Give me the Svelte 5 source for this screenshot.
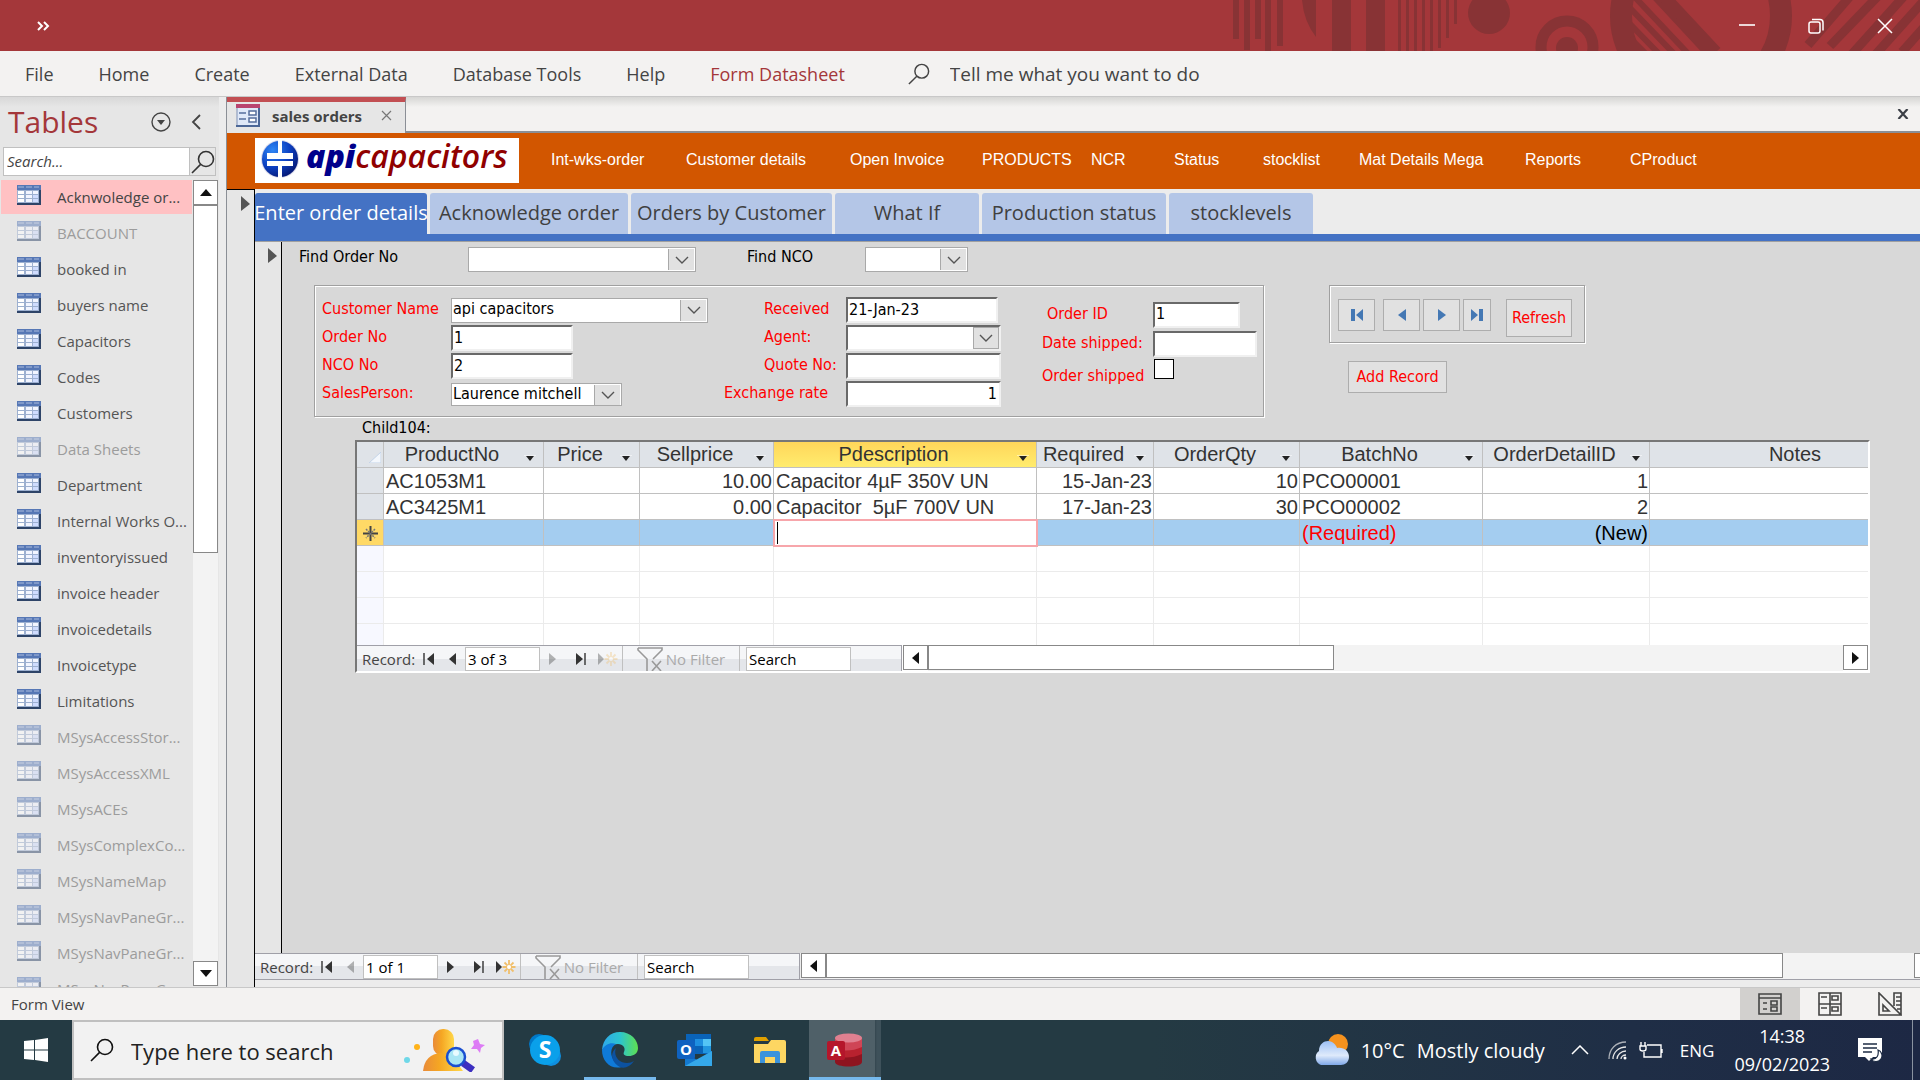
<script lang="ts">
    interface TableItem {
        name: string;
        hidden?: boolean;
    }

    interface Column {
        name: string;
        width: number;
        align: string;
    }

    const menu = ['File', 'Home', 'Create', 'External Data', 'Database Tools', 'Help'];

    const tables: TableItem[] = [
        { name: 'Acknwoledge or...' },
        { name: 'BACCOUNT', hidden: true },
        { name: 'booked in' },
        { name: 'buyers name' },
        { name: 'Capacitors' },
        { name: 'Codes' },
        { name: 'Customers' },
        { name: 'Data Sheets', hidden: true },
        { name: 'Department' },
        { name: 'Internal Works O...' },
        { name: 'inventoryissued' },
        { name: 'invoice header' },
        { name: 'invoicedetails' },
        { name: 'Invoicetype' },
        { name: 'Limitations' },
        { name: 'MSysAccessStor...', hidden: true },
        { name: 'MSysAccessXML', hidden: true },
        { name: 'MSysACEs', hidden: true },
        { name: 'MSysComplexCo...', hidden: true },
        { name: 'MSysNameMap', hidden: true },
        { name: 'MSysNavPaneGr...', hidden: true },
        { name: 'MSysNavPaneGr...', hidden: true },
        { name: 'MSysNavPaneGr...', hidden: true }
    ];

    const links = [
        'Int-wks-order', 'Customer details', 'Open Invoice', 'PRODUCTS', 'NCR',
        'Status', 'stocklist', 'Mat Details Mega', 'Reports', 'CProduct'
    ];

    const tabs = [
        { name: 'Enter order details', width: 172 },
        { name: 'Acknowledge order', width: 198 },
        { name: 'Orders by Customer', width: 201 },
        { name: 'What If', width: 144 },
        { name: 'Production status', width: 184 },
        { name: 'stocklevels', width: 144 }
    ];

    const columns: Column[] = [
        { name: 'ProductNo', width: 160, align: 'left' },
        { name: 'Price', width: 96, align: 'right' },
        { name: 'Sellprice', width: 134, align: 'right' },
        { name: 'Pdescription', width: 263, align: 'left' },
        { name: 'Required', width: 117, align: 'right' },
        { name: 'OrderQty', width: 146, align: 'right' },
        { name: 'BatchNo', width: 183, align: 'left' },
        { name: 'OrderDetailID', width: 167, align: 'right' },
        { name: 'Notes', width: 314, align: 'left' }
    ];

    const rows = [
        ['AC1053M1', '', '10.00', 'Capacitor 4µF 350V UN', '15-Jan-23', '10', 'PCO00001', '1', ''],
        ['AC3425M1', '', '0.00', 'Capacitor  5µF 700V UN', '17-Jan-23', '30', 'PCO00002', '2', '']
    ];

    let selectedTable = $state(0);
    let activeTab = $state(0);
    let shipped = $state(false);
</script>

{#snippet chevron()}
    <svg class="chevron" width="14" height="8" viewBox="0 0 14 8"><path d="M1 1l6 6 6-6" fill="none" stroke="#555" stroke-width="1.4" /></svg>
{/snippet}

{#snippet combo(id, value, width, small)}
    <div class="combo" class:small style:width="{width}px">
        <select {id}><option>{value}</option></select>
        <span class="drop">{@render chevron()}</span>
    </div>
{/snippet}

{#snippet lens(size, color)}
    <svg width={size} height={size} viewBox="0 0 24 24" fill="none" stroke={color} stroke-width="1.6">
        <circle cx="15" cy="9" r="7.5" /><path d="M9.6 14.4L1 23" />
    </svg>
{/snippet}

{#snippet sheetIcon()}
    <svg width="24" height="20" viewBox="0 0 24 20">
        <path d="M0 0h24v20H0z" fill="#9db0d0" />
        <path d="M0 0h24v5H0z" fill="#5677b5" />
        <path d="M22 5h2v15H0v-2h22z" fill="#2e4468" />
        <path d="M1 2h6M9 2h6M17 2h5" stroke="#a9bbdd" />
        <path d="M1 6h6v3H1zM1 10h6v3H1zM1 14h6v3H1z" fill="#fff" />
        <path d="M9 6h6v3H9zM9 10h6v3H9zM9 14h6v3H9zM16 6h5v3h-5z" fill="#f2f5ff" />
        <path d="M16 10h5v3h-5zM16 14h5v3h-5z" fill="#cfdcff" />
    </svg>
{/snippet}

{#snippet recordBar(id, position, first, next, thumb)}
    <div class="record-bar">
        <div class="record-nav">
            <label class="record-label" for="{id}-pos">Record:</label>
            <button aria-label="First record"><svg width="12" height="12" viewBox="0 0 12 12"><path d="M1 0v12" stroke="#333" stroke-width="1.4" /><path d="M11 0v12L4 6z" fill="#333" /></svg></button>
            <button aria-label="Previous record" disabled={!first}><svg width="8" height="12" viewBox="0 0 8 12"><path d="M7 0v12L0 6z" fill="#333" /></svg></button>
            <input class="position" id="{id}-pos" value={position} />
            <button aria-label="Next record" disabled={!next}><svg width="8" height="12" viewBox="0 0 8 12"><path d="M1 0v12l7-6z" fill="#333" /></svg></button>
            <button class="last" aria-label="Last record"><svg width="12" height="12" viewBox="0 0 12 12"><path d="M1 0v12l7-6z" fill="#333" /><path d="M10 0v12" stroke="#333" stroke-width="1.4" /></svg></button>
            <button class="new" aria-label="New record" disabled={!next}>
                <svg width="21" height="14" viewBox="0 0 21 14"><path d="M1 1v12l6-6z" fill="#333" /><path d="M14 0v14M7.5 7h13M9.5 2.5l9 9M18.5 2.5l-9 9" stroke="#f0bf6c" stroke-width="1.8" /><circle cx="14" cy="7" r="2" fill="#fff" /></svg>
            </button>
            <button class="filter">
                <svg width="26" height="25" viewBox="0 0 26 25" fill="none" stroke="#999" stroke-width="1.6"><path d="M1 2h24v2l-9 9M1 2v2l9 9v12" /><path d="M15 15l9 10M24 15l-9 10" /></svg>
                No Filter
            </button>
            <input class="record-search" aria-label="Search records" value="Search" />
        </div>
        <div class="h-scroll">
            <button class="scroll-button" aria-label="Scroll left"><svg width="7" height="12" viewBox="0 0 7 12"><path d="M7 0v12L0 6z" fill="#111" /></svg></button>
            <div class="h-track"><div class="h-thumb" style:width="{thumb}%"></div></div>
            <button class="scroll-button" aria-label="Scroll right"><svg width="7" height="12" viewBox="0 0 7 12"><path d="M0 0v12l7-6z" fill="#111" /></svg></button>
        </div>
    </div>
{/snippet}

<div class="window">
    <header class="title-bar">
        <button class="more" aria-label="Quick access">
            <svg width="14" height="10" viewBox="0 0 14 10" fill="none" stroke="#fff" stroke-width="2"><path d="M2 1l4 4-4 4M8 1l4 4-4 4" /></svg>
        </button>
        <div class="title-right">
            <svg class="pattern" width="690" height="51" viewBox="0 0 690 51" fill="#883335">
                <path d="M3 0h6v39H3zM14 0h6v50h-6zM25 0h6v39h-6zM35 0h6v51h-6zM47 0h6v46h-6z" />
                <path d="M72 0q2 22 14 37V0zM102 0h19v51h-19zM136 0h19v51h-19z" />
                <path d="M168 0h3v51h-3zM176 0h3v51h-3zM184 0h3v51h-3zM192 0h3v51h-3zM200 0h3v51h-3zM208 0h3v48h-3zM216 0h3v38h-3zM224 0h3v24h-3z" />
                <circle cx="259" cy="13" r="21" />
                <circle cx="337" cy="47" r="26" fill="none" stroke="#883335" stroke-width="11" />
                <circle cx="337" cy="48" r="11" />
                <circle cx="471" cy="16" r="80" fill="none" stroke="#883335" stroke-width="22" />
                <path d="M418 -10l65 70M400 -8l66 70M400 8l50 52M400 24l34 35M400 38l20 20" fill="none" stroke="#883335" stroke-width="6" />
                <path d="M428 -10l58 62" fill="none" stroke="#883335" stroke-width="12" />
                <path d="M622 -6l-44 51M650 -6l-50 52M676 -6l-54 60M700 -6l-54 60M720 -2l-48 54" fill="none" stroke="#883335" stroke-width="9" />
            </svg>
            <div class="window-buttons">
                <button aria-label="Minimize"><svg width="16" height="16" viewBox="0 0 16 16"><path d="M0 7h16" stroke="#fff" stroke-width="1.6" /></svg></button>
                <button aria-label="Restore"><svg width="16" height="16" viewBox="0 0 16 16" fill="none" stroke="#fff" stroke-width="1.5"><rect x="1" y="4" width="11" height="11" rx="2" /><path d="M4 1.5h8q3 0 3 3v8" /></svg></button>
                <button aria-label="Close"><svg width="16" height="16" viewBox="0 0 16 16"><path d="M1 1l14 14M15 1L1 15" stroke="#fff" stroke-width="1.5" /></svg></button>
            </div>
        </div>
    </header>

    <nav class="ribbon">
        {#each menu as name}
            <button>{name}</button>
        {/each}
        <button class="context">Form Datasheet</button>
        <label class="tell-me">
            {@render lens(22, '#444')}
            <input placeholder="Tell me what you want to do" />
        </label>
    </nav>

    <div class="workspace">
        <aside class="sidebar">
            <div class="sidebar-head">
                <h2>Tables</h2>
                <button aria-label="Choose category"><svg width="20" height="20" viewBox="0 0 20 20"><circle cx="10" cy="10" r="9" fill="none" stroke="#444" stroke-width="1.4" /><path d="M6 8h8l-4 5z" fill="#444" /></svg></button>
                <button aria-label="Collapse pane"><svg width="10" height="16" viewBox="0 0 10 16"><path d="M9 1L2 8l7 7" fill="none" stroke="#444" stroke-width="1.8" /></svg></button>
            </div>
            <div class="sidebar-search">
                <input aria-label="Search tables" placeholder="Search..." />
                <button aria-label="Search">{@render lens(24, '#333')}</button>
            </div>
            <div class="sidebar-body">
                <ul>
                    {#each tables as table, i}
                        <li>
                            <button class:selected={i === selectedTable} class:dim={table.hidden} onclick={() => (selectedTable = i)}>
                                {@render sheetIcon()}
                                <span>{table.name}</span>
                            </button>
                        </li>
                    {/each}
                </ul>
                <div class="v-scroll">
                    <button class="scroll-button" aria-label="Scroll up"><svg width="12" height="7" viewBox="0 0 12 7"><path d="M0 7h12L6 0z" fill="#111" /></svg></button>
                    <div class="v-track"><div class="v-thumb"></div></div>
                    <button class="scroll-button" aria-label="Scroll down"><svg width="12" height="7" viewBox="0 0 12 7"><path d="M0 0h12L6 7z" fill="#111" /></svg></button>
                </div>
            </div>
        </aside>

        <main>
            <div class="doc-tabs">
                <div class="doc-tab">
                    <svg width="24" height="23" viewBox="0 0 24 23">
                        <path d="M1 1h22v21H1z" fill="#dfe8f8" stroke="#7e90b4" />
                        <path d="M0 0h24v4H0z" fill="#b9446f" />
                        <path d="M24 4v19H0v-2h22V4z" fill="#4c6797" />
                        <path d="M3 9h7M3 15h7" stroke="#566d9c" stroke-width="1.5" />
                        <path d="M13 7h7v4h-7zM13 14h7v4h-7z" fill="#fff" stroke="#566d9c" stroke-width="1.5" />
                    </svg>
                    <span>sales orders</span>
                    <button aria-label="Close tab"><svg width="11" height="11" viewBox="0 0 11 11"><path d="M1 1l9 9M10 1l-9 9" stroke="#777" stroke-width="1.2" /></svg></button>
                </div>
                <button class="close-doc" aria-label="Close document"><svg width="12" height="10" viewBox="0 0 12 10"><path d="M1.5 0l9 10M10.5 0l-9 10" stroke="#3b3f46" stroke-width="2.2" /></svg></button>
            </div>

            <div class="banner">
                <div class="logo">
                    <svg width="40" height="40" viewBox="0 0 40 40">
                        <defs>
                            <radialGradient id="ball" cx="30%" cy="25%" r="80%">
                                <stop offset="0" stop-color="#2f86f5" /><stop offset="0.6" stop-color="#0c3fc0" /><stop offset="1" stop-color="#061a78" />
                            </radialGradient>
                        </defs>
                        <circle cx="20" cy="20" r="19" fill="#d9d9ea" />
                        <circle cx="20" cy="20" r="18" fill="url(#ball)" />
                        <path d="M18 1h4v13h11v6H7v-6h11zM7 22h26v5H22v12h-4V27H7z" fill="#fff" />
                        <path d="M7 16h26v2H7z" fill="#fff" />
                    </svg>
                    <span><b>api</b>capacitors</span>
                </div>
                <nav>
                    {#each links as link}
                        <a href="#{link}">{link}</a>
                    {/each}
                </nav>
            </div>

            <div class="form-area">
                <div class="selector">
                    <svg width="9" height="15" viewBox="0 0 9 15"><path d="M0 0v15l9-7z" fill="#555" /></svg>
                </div>
                <div class="form-main">
                    <div class="tab-strip" role="tablist">
                        {#each tabs as tab, i}
                            <button role="tab" aria-selected={i === activeTab} class:active={i === activeTab} style:width="{tab.width}px" onclick={() => (activeTab = i)}>{tab.name}</button>
                        {/each}
                    </div>

                    <div class="sub-area">
                        <div class="selector sub">
                            <svg width="9" height="15" viewBox="0 0 9 15"><path d="M0 0v15l9-7z" fill="#555" /></svg>
                        </div>
                        <div class="form">
                            <div class="find-row">
                                <label class="find-order" for="find-order">Find Order No</label>
                                {@render combo('find-order', '', 228, false)}
                                <label class="find-nco" for="find-nco">Find NCO</label>
                                {@render combo('find-nco', '', 103, false)}
                            </div>

                            <div class="details-row">
                                <div class="group details">
                                    <div class="fields first">
                                        <label for="customer">Customer Name</label>
                                        {@render combo('customer', 'api capacitors', 257, false)}
                                        <label for="order-no">Order No</label>
                                        <input id="order-no" class="sunken w-122" value="1" />
                                        <label for="nco-no">NCO No</label>
                                        <input id="nco-no" class="sunken w-122" value="2" />
                                        <label for="sales">SalesPerson:</label>
                                        {@render combo('sales', 'Laurence mitchell', 171, true)}
                                    </div>
                                    <div class="fields second">
                                        <label class="indent" for="received">Received</label>
                                        <input id="received" class="sunken w-152" value="21-Jan-23" />
                                        <label class="indent" for="agent">Agent:</label>
                                        <div class="combo inset">
                                            <select id="agent"><option></option></select>
                                            <span class="drop">{@render chevron()}</span>
                                        </div>
                                        <label class="indent" for="quote">Quote No:</label>
                                        <input id="quote" class="sunken w-155" />
                                        <label for="rate">Exchange rate</label>
                                        <input id="rate" class="sunken w-155 number" value="1" />
                                    </div>
                                    <div class="fields third">
                                        <label class="order-id" for="order-id">Order ID</label>
                                        <input id="order-id" class="sunken w-87" value="1" />
                                        <label for="date-shipped">Date shipped:</label>
                                        <input id="date-shipped" class="sunken w-104" />
                                        <label class="low" for="shipped">Order shipped</label>
                                        <input id="shipped" type="checkbox" bind:checked={shipped} />
                                    </div>
                                </div>

                                <div class="actions">
                                    <div class="group nav-group">
                                        <button class="nav-button spaced" aria-label="First"><svg width="12" height="12" viewBox="0 0 12 12" fill="#4478b4"><path d="M0 0h4v12H0zM12 0v12L5 6z" /></svg></button>
                                        <button class="nav-button" aria-label="Previous"><svg width="8" height="12" viewBox="0 0 8 12" fill="#4478b4"><path d="M8 0v12L0 6z" /></svg></button>
                                        <button class="nav-button" aria-label="Next"><svg width="8" height="12" viewBox="0 0 8 12" fill="#4478b4"><path d="M0 0v12l8-6z" /></svg></button>
                                        <button class="nav-button narrow" aria-label="Last"><svg width="12" height="12" viewBox="0 0 12 12" fill="#4478b4"><path d="M0 0v12l7-6zM8 0h4v12H8z" /></svg></button>
                                        <button class="text-button refresh">Refresh</button>
                                    </div>
                                    <button class="text-button add">Add Record</button>
                                </div>
                            </div>

                            <p class="child-label" id="child-label">Child104:</p>

                            <div class="subform">
                                <div class="sheet">
                                    <table aria-labelledby="child-label">
                                        <colgroup>
                                            <col class="col-selector" />
                                            {#each columns as column}
                                                <col style:width="{column.width}px" />
                                            {/each}
                                        </colgroup>
                                        <thead>
                                            <tr>
                                                <th class="corner" aria-label="Select all"><svg width="12" height="11" viewBox="0 0 12 11"><path d="M12 0v11H0z" fill="#f3f7fc" stroke="#c3d3e8" /></svg></th>
                                                {#each columns as column}
                                                    <th class:current={column.name === 'Pdescription'}>
                                                        <div>
                                                            <span>{column.name}</span>
                                                            <svg width="12" height="6" viewBox="0 0 12 6"><path d="M0 0h12" stroke="#fff" /><path d="M2 1h8L6 6z" fill="#222" /></svg>
                                                        </div>
                                                    </th>
                                                {/each}
                                            </tr>
                                        </thead>
                                        <tbody>
                                            {#each rows as row}
                                                <tr>
                                                    <th scope="row" aria-label="Record"></th>
                                                    {#each row as cell, i}
                                                        <td class={columns[i].align}>{cell}</td>
                                                    {/each}
                                                </tr>
                                            {/each}
                                            <tr class="new-row">
                                                <th scope="row" aria-label="New record"><svg width="15" height="15" viewBox="0 0 15 15"><path d="M7.5 0v15M0 7.5h15" stroke="#444" stroke-width="2" /><path d="M3 3l9 9M12 3l-9 9" stroke="#777" stroke-width="1.5" stroke-dasharray="2 1" /></svg></th>
                                                <td></td>
                                                <td></td>
                                                <td></td>
                                                <td class="editing"><div><span class="caret"></span><input aria-label="Pdescription" /></div></td>
                                                <td></td>
                                                <td></td>
                                                <td class="left required">(Required)</td>
                                                <td class="right">(New)</td>
                                                <td></td>
                                            </tr>
                                            {#each [1, 2, 3, 4] as _}
                                                <tr class="blank">
                                                    <th scope="row" aria-label="Empty"></th>
                                                    {#each columns as _column}
                                                        <td></td>
                                                    {/each}
                                                </tr>
                                            {/each}
                                        </tbody>
                                    </table>
                                </div>
                                {@render recordBar('sub', '3 of 3', true, false, 44.4)}
                            </div>
                        </div>
                    </div>

                    <div class="main-record">
                        {@render recordBar('main', '1 of 1', false, true, 88)}
                    </div>
                </div>
            </div>
        </main>
    </div>

    <footer class="status-bar">
        <span>Form View</span>
        <div class="views">
            <button class="on" aria-label="Form View"><svg width="24" height="24" viewBox="0 0 24 24" fill="none" stroke="#444" stroke-width="1.6"><path d="M1 2h22v20H1zM1 6h22M5 11h4M5 17h4M13 9h6v4h-6zM13 15h6v4h-6z" /></svg></button>
            <button aria-label="Layout View"><svg width="24" height="24" viewBox="0 0 24 24" fill="none" stroke="#444" stroke-width="1.6"><path d="M1 1h22v22H1zM12 1v22M1 12h22M3 5h6M3 16h6M14 4h6v4h-6zM14 15h6v4h-6z" /></svg></button>
            <button aria-label="Design View"><svg width="24" height="24" viewBox="0 0 24 24" fill="none" stroke="#444" stroke-width="1.6"><path d="M1 1v22h22zM5 13v6h6zM16 14V1h7v22M18 5h5M18 9h5M18 13h5M19 17h4" /></svg></button>
        </div>
    </footer>

    <div class="taskbar">
        <button class="start" aria-label="Start"><svg width="24" height="24" viewBox="0 0 24 24" fill="#fff"><path d="M0 3l10-1v9.500H0zM11 2l13-2v11.500H11zM0 12.500h10V22L0 21zM11 12.500h13V24l-13-2z" /></svg></button>
        <label class="task-search">
            {@render lens(24, '#111')}
            <input placeholder="Type here to search" />
            <svg width="82" height="44" viewBox="0 0 82 44">
                <defs>
                    <linearGradient id="gold" x1="0" x2="1"><stop offset="0" stop-color="#e98b3a" /><stop offset="0.4" stop-color="#f5a623" /><stop offset="1" stop-color="#ffd84a" /></linearGradient>
                </defs>
                <circle cx="14" cy="19" r="3" fill="#ffb31a" /><circle cx="4" cy="32" r="3" fill="#6fd8e8" />
                <rect x="30" y="1" width="21" height="27" rx="10" fill="url(#gold)" />
                <path d="M20 43q2-17 18-18 10 1 22 18z" fill="url(#gold)" />
                <path d="M60 35l10 7" stroke="#3c2fc0" stroke-width="7" />
                <circle cx="53" cy="29" r="9" fill="#a9e6f4" stroke="#1a4fd0" stroke-width="2.5" />
                <circle cx="53" cy="25" r="3" fill="#e8fbff" />
                <path d="M75 11l2 5 5 1-4 3-1 5-3-4-6 0 3-4-1-4z" fill="#dd7bf5" />
            </svg>
        </label>
        <div class="apps">
            <button aria-label="Skype">
                <svg width="34" height="34" viewBox="0 0 34 34"><circle cx="11" cy="11" r="10" fill="#0078c8" /><circle cx="23" cy="23" r="10" fill="#0f8fe0" /><circle cx="17" cy="17" r="15" fill="#0aa0ea" /><text x="17" y="25" text-anchor="middle" font-size="23" font-weight="700" fill="#fff">S</text></svg>
            </button>
            <button class="open" aria-label="Edge">
                <svg width="36" height="36" viewBox="0 0 36 36">
                    <defs><linearGradient id="edge" x1="0" x2="1"><stop offset="0" stop-color="#2fa7ea" /><stop offset="0.5" stop-color="#2cc4cf" /><stop offset="1" stop-color="#5fe04f" /></linearGradient></defs>
                    <path d="M0 18C1 7 8 0 18 0c11 0 18 8 18 16 0 6-5 8-9 8-5 0-6-2-5-4 2-4-1-8-6-8C8 12 3 15 0 18z" fill="url(#edge)" />
                    <path d="M0 18c3-6 9-8 14-6-4 2-6 7-4 13 2 5 6 8 10 10C8 38 0 29 0 18z" fill="#0f7ad8" />
                    <path d="M14 16c-3 8 3 15 11 15 3 0 5-1 7-2-4 6-10 8-14 6-8-4-11-13-4-19z" fill="#0c52a0" />
                </svg>
            </button>
            <button aria-label="Outlook">
                <svg width="36" height="34" viewBox="0 0 36 34"><path d="M9 1h25v20H9z" fill="#0a63b8" /><path d="M18 6h8v7h-8z" fill="#1f8fe0" /><path d="M26 6h8v7h-8z" fill="#54c4f5" /><path d="M26 13h8v7h-8z" fill="#2296e0" /><path d="M8 20l14 8 13-10v15H8z" fill="#1479d0" /><path d="M8 33l27-15v15z" fill="#35a8ea" /><rect y="7" width="18" height="19" rx="2" fill="#0f62c0" /><text x="9" y="22" text-anchor="middle" font-size="15" font-weight="700" fill="#fff">O</text></svg>
            </button>
            <button aria-label="File Explorer">
                <svg width="32" height="28" viewBox="0 0 32 28"><path d="M0 3q0-2 2-2h10l3 4H0z" fill="#e0a000" /><path d="M0 8l14 0 3-4h13q2 0 2 2v20q0 1-1 1H1q-1 0-1-1z" fill="#fdd662" /><path d="M6 27V17q0-2 2-2h16q2 0 2 2v10h-5v-6H11v6z" fill="#3b93dc" /></svg>
            </button>
            <button class="open current" aria-label="Access">
                <svg width="36" height="34" viewBox="0 0 36 34"><path d="M8 5v24c0 6 27 6 27 0V5z" fill="#8e1420" /><path d="M8 12h27v9q-13 6-27 2z" fill="#b8222f" /><path d="M8 5h27v9q-13 6-27 2z" fill="#cf4556" /><ellipse cx="21.500" cy="5" rx="13.500" ry="4.500" fill="#e08090" /><rect y="8" width="18" height="19" rx="2" fill="#b5162b" /><text x="9" y="23" text-anchor="middle" font-size="15" font-weight="700" fill="#fff">A</text></svg>
            </button>
        </div>
        <div class="tray">
            <button class="weather">
                <svg width="36" height="32" viewBox="0 0 36 32">
                    <defs><linearGradient id="cloud" x1="0" x2="0" y1="0" y2="1"><stop offset="0" stop-color="#9cc0f5" /><stop offset="0.6" stop-color="#dfeafb" /><stop offset="1" stop-color="#7fa8e8" /></linearGradient></defs>
                    <circle cx="25" cy="10" r="10" fill="#f5921e" />
                    <path d="M8 31a8 8 0 0 1-2-14C6 10 11 7 15 7c5 0 8 4 9 7 7-1 12 3 12 9 0 5-4 8-8 8z" fill="url(#cloud)" />
                </svg>
                <span>10°C</span>
                <span>Mostly cloudy</span>
            </button>
            <button aria-label="Show hidden icons"><svg width="18" height="10" viewBox="0 0 18 10"><path d="M1 9l8-8 8 8" fill="none" stroke="#fff" stroke-width="1.5" /></svg></button>
            <button class="wifi" aria-label="Network">
                <svg width="19" height="19" viewBox="0 0 19 19" fill="none" stroke="#e8e8e8" stroke-width="1.3"><path d="M1 18C1 8 8 1 18 1" opacity="0.7" /><path d="M5 18C5 11 11 6 18 6M9 18c0-4 4-8 9-8M13 18c0-2 2-4 5-4" /><circle cx="17" cy="17" r="1.5" fill="#fff" stroke="none" /></svg>
            </button>
            <button class="battery" aria-label="Battery">
                <svg width="24" height="18" viewBox="0 0 24 18" fill="none" stroke="#fff" stroke-width="1.4"><path d="M8 4h14v12H5v-5M23 8v4M1 5h6v3q0 2-3 2-3 0-3-2zM2 1v4M6 1v4" /></svg>
            </button>
            <button class="lang">ENG</button>
            <button class="clock"><span>14:38</span><span>09/02/2023</span></button>
            <button class="notes" aria-label="Notifications">
                <svg width="24" height="26" viewBox="0 0 24 26"><path d="M0 1h24v19h-9l-4 4-4-4H0z" fill="#fff" /><path d="M5 7h14M5 11h14M5 15h9" stroke="#1e2c44" stroke-width="1.4" /><path d="M20 13a6 6 0 1 1-7 9c6 1 8-4 7-9z" fill="#fff" stroke="#1e2c44" stroke-width="1.2" /></svg>
            </button>
            <span class="peek"></span>
        </div>
    </div>
</div>

<style>
    :global(body) {
        margin: 0;
    }

    .window {
        display: flex;
        flex-direction: column;
        height: 100vh;
        overflow: hidden;
        font-family: "Open Sans", "Noto Sans", sans-serif;
        font-size: 16px;
        color: #444;
    }

    .window * {
        box-sizing: border-box;
    }

    button {
        display: flex;
        align-items: center;
        justify-content: center;
        flex-shrink: 0;
        padding: 0;
        border: 0;
        background: none;
        font: inherit;
        color: inherit;
        white-space: nowrap;
    }

    input,
    select {
        min-width: 0;
        margin: 0;
        border: 0;
        border-radius: 0;
        outline: 0;
        font: inherit;
        color: inherit;
        background: none;
    }

    svg {
        display: block;
        flex-shrink: 0;
    }

    /* Title bar */
    .title-bar {
        display: flex;
        justify-content: space-between;
        flex-shrink: 0;
        height: 51px;
        background: #a4373a;
    }

    .more {
        margin-left: 36px;
    }

    .title-right {
        display: grid;
        justify-items: end;
    }

    .pattern,
    .window-buttons {
        grid-area: 1 / 1;
    }

    .window-buttons {
        display: flex;
        padding-right: 1px;
    }

    .window-buttons button {
        width: 69px;
    }

    /* Ribbon */
    .ribbon {
        display: flex;
        align-items: center;
        flex-shrink: 0;
        gap: 45px;
        height: 46px;
        padding-left: 25px;
        background: #f3f2f1;
        border-bottom: 1px solid #c8c8c8;
        font-size: 18px;
        color: #444;
    }

    .ribbon .context {
        color: #a4373a;
    }

    .tell-me {
        display: flex;
        align-items: center;
        gap: 20px;
        margin-left: 18px;
        font-size: 19px;
    }

    .tell-me input {
        width: 300px;
        padding: 0;
    }

    input::placeholder {
        color: inherit;
        opacity: 1;
    }

    .workspace {
        display: flex;
        flex: 1;
        min-height: 0;
        background: #ececec;
    }

    /* Navigation pane */
    .sidebar {
        display: flex;
        flex-direction: column;
        width: 219px;
        flex-shrink: 0;
        background: linear-gradient(#d8d8d8, #e6e6e6 10px);
    }

    .sidebar-head {
        display: flex;
        align-items: center;
        height: 50px;
        padding: 0 18px 0 8px;
        gap: 20px;
    }

    .sidebar-head h2 {
        flex: 1;
        margin: 0;
        font-size: 30px;
        font-weight: 400;
        line-height: 36px;
        color: #a4373a;
    }

    .sidebar-search {
        display: flex;
        height: 29px;
        margin: 0 3px 4px;
        border: 1px solid #c0c0c0;
        background: #fff;
        font-size: 15px;
        font-style: italic;
    }

    .sidebar-search input {
        flex: 1;
        padding: 0 3px 2px;
    }

    .sidebar-search button {
        width: 26px;
        border-left: 1px solid #c0c0c0;
        background: #e6e6e6;
    }

    .sidebar-body {
        display: flex;
        flex: 1;
        min-height: 0;
    }

    ul {
        flex: 1;
        margin: 0;
        padding: 0 1px;
        list-style: none;
        overflow: hidden;
    }

    li {
        height: 36px;
    }

    li button {
        justify-content: flex-start;
        gap: 16px;
        width: 100%;
        height: 34px;
        padding-left: 16px;
        font-size: 15px;
        color: #555;
    }

    li svg {
        margin-bottom: 4px;
    }

    li button.selected {
        background: #ffc1c3;
        color: #444;
    }

    li button.dim {
        color: #9c9c9c;
    }

    .dim svg {
        opacity: 0.5;
    }

    .v-scroll {
        display: flex;
        flex-direction: column;
        width: 26px;
        padding: 0 1px 1px 0;
    }

    .scroll-button {
        width: 25px;
        height: 25px;
        border: 1px solid #888;
        background: #fff;
    }

    .v-track {
        flex: 1;
        background: #f3f3f3;
    }

    .v-thumb {
        height: 46%;
        border: 1px solid #888;
        background: #fff;
    }

    /* Document area */
    main {
        display: flex;
        flex-direction: column;
        flex: 1;
        min-width: 0;
        margin-left: 7px;
        border-left: 1px solid #8b8f96;
    }

    .doc-tabs {
        display: flex;
        justify-content: space-between;
        flex-shrink: 0;
        height: 36px;
        background: linear-gradient(#d6d6d4, #f3f2f1 10px);
        border-bottom: 2px solid #8b8f96;
    }

    .doc-tab {
        display: flex;
        align-items: center;
        width: 179px;
        height: 36px;
        padding: 0 13px 4px 9px;
        border-top: 5px solid #c24f53;
        border-right: 1px solid #8b8f96;
        background: #e6e6e6;
        font-size: 15px;
        font-weight: 700;
    }

    .doc-tab span {
        flex: 1;
        margin-left: 12px;
    }

    .close-doc {
        margin-right: 11px;
    }

    .banner {
        display: flex;
        align-items: center;
        flex-shrink: 0;
        height: 56px;
        padding-left: 28px;
        background: #d25600;
    }

    .logo {
        display: flex;
        align-items: center;
        gap: 6px;
        width: 264px;
        height: 45px;
        margin-bottom: 2px;
        padding: 0 0 2px 5px;
        flex-shrink: 0;
        background: #fff;
        color: #900000;
        font-size: 32px;
        font-style: italic;
        font-weight: 600;
        line-height: 38px;
    }

    .logo span {
        margin-bottom: 6px;
    }

    .logo b {
        color: #00008b;
        font-weight: 800;
    }

    .banner nav {
        display: grid;
        grid-template-columns: 135px 164px 132px 109px 83px 89px 96px 166px 105px auto;
        margin: 0 0 2px 32px;
        font-family: "Liberation Sans", Arial, sans-serif;
        font-size: 16px;
        line-height: 20px;
    }

    .banner a {
        color: #fff;
        text-decoration: none;
        white-space: nowrap;
    }

    .form-area {
        display: flex;
        flex: 1;
        min-height: 0;
    }

    .selector {
        width: 28px;
        flex-shrink: 0;
        padding: 6px 0 0 14px;
        border-right: 1px solid #000;
        border-top: 1px solid #000;
        background: #e6e6e6;
    }

    .selector.sub {
        width: 27px;
        border-top: 0;
        padding-left: 13px;
    }

    .form-main {
        display: flex;
        flex-direction: column;
        flex: 1;
        min-width: 0;
    }

    .tab-strip {
        display: flex;
        gap: 3px;
        flex-shrink: 0;
        padding-top: 4px;
        border-bottom: 7px solid #4472c4;
        background: #ececec;
        font-size: 20px;
    }

    .tab-strip button {
        height: 41px;
        padding-bottom: 2px;
        border-radius: 3px 3px 0 0;
        background: #b4c6e7;
        color: #404040;
    }

    .tab-strip button.active {
        background: #4472c4;
        color: #fff;
    }

    .sub-area {
        display: flex;
        flex: 1;
        min-height: 0;
        border-top: 1px solid #a0a0a0;
    }

    .form {
        flex: 1;
        min-width: 0;
        overflow: hidden;
        background: #d8d8d8;
        color: #000;
        font-family: "DejaVu Sans Condensed", "Noto Sans", sans-serif;
        font-size: 16px;
        line-height: 20px;
    }

    .find-row {
        display: flex;
        padding: 5px 0 0 17px;
    }

    .find-order {
        width: 169px;
    }

    .find-nco {
        width: 118px;
        margin-left: 51px;
    }

    .combo {
        display: grid;
        grid-template-columns: 1fr 28px;
        height: 25px;
        border: 1px solid #a9a9a9;
        background: #fff;
        color: #000;
    }

    .combo.small {
        height: 23px;
    }

    .combo select {
        grid-area: 1 / 1 / 2 / 3;
        height: 100%;
        padding: 0 0 2px 1px;
        appearance: none;
    }

    .drop {
        grid-area: 1 / 2;
        display: flex;
        align-items: center;
        justify-content: center;
        margin: 1px;
        border-left: 1px solid #a9a9a9;
        background: #e1e1e1;
        pointer-events: none;
    }

    .group {
        border: 1px solid #a0a0a0;
        box-shadow: inset 1px 1px #fff, 1px 1px #fff;
    }

    .details-row {
        display: flex;
        gap: 65px;
        margin-top: 13px;
        padding-left: 32px;
    }

    .details {
        display: flex;
        width: 950px;
        height: 132px;
        padding: 10px 0 0 7px;
    }

    .fields {
        display: grid;
        grid-auto-rows: 28px;
        align-content: start;
        align-items: center;
        color: #ff0000;
    }

    .fields label {
        padding-bottom: 2px;
        white-space: nowrap;
    }

    .first {
        grid-template-columns: 129px auto;
        justify-items: start;
    }

    .second {
        grid-template-columns: 122px 155px;
        margin-left: 16px;
    }

    .third {
        grid-template-columns: 111px auto;
        grid-auto-rows: 29px;
        margin-left: 41px;
        padding-top: 4px;
    }

    .indent {
        padding-left: 40px;
    }

    .order-id {
        padding-left: 5px;
    }

    .fields .low {
        padding: 6px 0 0;
    }

    .sunken {
        height: 26px;
        padding: 0 2px 2px 1px;
        border: 2px solid;
        border-color: #696969 #f0f0f0 #f0f0f0 #696969;
        background: #fff;
        color: #000;
    }

    .w-122 {
        width: 122px;
    }

    .w-152 {
        width: 152px;
    }

    .w-155 {
        width: 155px;
    }

    .w-87 {
        width: 87px;
    }

    .w-104 {
        width: 104px;
    }

    .number {
        text-align: right;
    }

    .combo.inset {
        grid-template-columns: 1fr 26px;
        height: 26px;
        border: 2px solid;
        border-color: #696969 #f0f0f0 #f0f0f0 #696969;
    }

    .inset .drop {
        margin: 0;
        border: 1px solid #a9a9a9;
    }

    input[type="checkbox"] {
        appearance: none;
        width: 20px;
        height: 20px;
        margin: 0 0 8px 1px;
        border: 1px solid #000;
        background: #fff;
    }

    .nav-group {
        display: flex;
        align-items: flex-start;
        width: 256px;
        height: 58px;
        padding: 13px 0 0 8px;
        gap: 3px;
    }

    .nav-button,
    .text-button {
        height: 32px;
        border: 1px solid #adadad;
        background: #e1e1e1;
    }

    .nav-button {
        width: 37px;
    }

    .spaced {
        margin-right: 5px;
    }

    .narrow {
        width: 28px;
    }

    .text-button {
        color: #ff0000;
    }

    .refresh {
        width: 66px;
        height: 38px;
        margin-left: 12px;
    }

    .add {
        width: 99px;
        margin: 18px 0 0 19px;
    }

    .child-label {
        margin: 1px 0 2px 80px;
    }

    /* Datasheet */
    .subform {
        margin: 0 50px 0 73px;
        border: 2px solid;
        border-color: #777 #fff #fff #777;
        background: #fff;
    }

    .sheet {
        height: 203px;
        overflow: hidden;
    }

    table {
        width: 1607px;
        table-layout: fixed;
        border-spacing: 0;
        font-family: "Liberation Sans", Arial, sans-serif;
        font-size: 20px;
        line-height: 23px;
        color: #333;
    }

    .col-selector {
        width: 27px;
    }

    th,
    td {
        height: 26px;
        padding: 2px 2px 0;
        border-right: 1px solid #c0c0c0;
        border-bottom: 1px solid #c0c0c0;
        font-weight: 400;
        white-space: pre;
    }

    th {
        background: #dfe3e8;
    }

    thead th {
        padding: 0;
    }

    th > div {
        display: flex;
        align-items: center;
        padding-right: 7px;
    }

    th span {
        flex: 1;
        padding-right: 4px;
    }

    th > div svg {
        margin-top: 6px;
    }

    .corner svg {
        margin: 6px 0 0 12px;
    }

    th.current {
        background: linear-gradient(#ffd65a, #ffec6e);
    }

    td.left {
        text-align: left;
    }

    td.right {
        padding-right: 1px;
        text-align: right;
    }

    .new-row td {
        background: #a4cdf0;
        color: #000;
    }

    .new-row th {
        background: #ffd966;
    }

    .new-row th svg {
        margin: 0 auto;
    }

    .new-row td.required {
        color: #ff0000;
    }

    .new-row .editing {
        padding: 0;
        background: #fff;
        outline: 2px solid #f7a6ab;
        outline-offset: -1px;
    }

    .editing div {
        display: flex;
        align-items: center;
        padding-left: 3px;
    }

    .caret {
        width: 1px;
        height: 22px;
        background: #000;
    }

    .editing input {
        flex: 1;
        height: 22px;
    }

    .blank th {
        background: #f7f8ff;
    }

    .blank th,
    .blank td {
        border-color: #ebebeb;
    }

    /* Record navigation */
    .record-bar {
        display: flex;
        height: 26px;
        font-family: "Open Sans", "Noto Sans", sans-serif;
        font-size: 15px;
        color: #444;
    }

    .record-nav {
        display: flex;
        align-items: center;
        width: 545px;
        flex-shrink: 0;
        padding-left: 5px;
        border-top: 1px solid #a0a0a8;
        border-right: 1px solid #a0a0a8;
        background: linear-gradient(#f5f6f8 50%, #e4e6ea 50%);
    }

    .record-label {
        width: 55px;
    }

    .record-nav button {
        width: 24px;
    }

    .record-nav button:disabled svg {
        opacity: 0.35;
    }

    .record-nav input {
        height: 24px;
        padding: 0 2px;
        border: 1px solid #c0c0c0;
        background: #fff;
        color: #000;
    }

    .position {
        width: 75px;
    }

    .record-nav button.last {
        margin-left: 5px;
    }

    .record-nav button.new {
        width: 29px;
    }

    .record-nav button.filter {
        width: 118px;
        height: 100%;
        gap: 3px;
        margin-right: 6px;
        border: solid #c0c0c0;
        border-width: 0 1px;
        color: #aaa;
    }

    .record-search {
        width: 105px;
    }

    .h-scroll {
        display: flex;
        flex: 1;
        margin-left: 1px;
    }

    .h-track {
        flex: 1;
        background: #f3f3f3;
    }

    .h-thumb {
        height: 25px;
        border: 1px solid #888;
        background: #fff;
    }

    .main-record {
        height: 34px;
        flex-shrink: 0;
        overflow: hidden;
        background: #ececec;
    }

    .main-record .record-bar {
        width: calc(100% + 19px);
        height: 27px;
        border-bottom: 1px solid #a0a0a8;
    }

    /* Status bar */
    .status-bar {
        display: flex;
        align-items: center;
        justify-content: space-between;
        flex-shrink: 0;
        height: 33px;
        padding-left: 11px;
        border-top: 1px solid #c8c8c8;
        background: #f3f2f1;
        font-size: 15px;
    }

    .views {
        display: flex;
        height: 100%;
    }

    .views button {
        width: 60px;
    }

    .views .on {
        background: #d2d0ce;
    }

    /* Taskbar */
    .taskbar {
        display: flex;
        flex-shrink: 0;
        height: 60px;
        background: linear-gradient(90deg, #243a43 60%, #1f2e46 85%, #1d2844);
        color: #fff;
    }

    .start {
        width: 72px;
    }

    .task-search {
        display: flex;
        align-items: center;
        width: 432px;
        padding: 0 17px 0 16px;
        gap: 17px;
        border: 2px solid #c0c0c0;
        background: #f2f2f2;
        color: #222;
        font-size: 22px;
    }

    .task-search input {
        flex: 1;
        padding: 2px 0 0;
    }

    .apps {
        display: flex;
        flex: 1;
        margin-left: 5px;
    }

    .apps button {
        width: 72px;
        margin-right: 3px;
        border-bottom: 3px solid transparent;
        border-top: 3px solid transparent;
    }

    .apps .open {
        border-bottom-color: #76b9ed;
    }

    .apps .current {
        border-top: 0;
        padding-top: 3px;
        background: linear-gradient(90deg, #4f6068 66px, #34464f 66px, #3e515a 68px);
    }

    .tray {
        display: flex;
    }

    .weather {
        gap: 12px;
        margin-right: 26px;
        font-size: 20px;
    }

    .wifi {
        margin-left: 19px;
    }

    .battery {
        margin-left: 12px;
    }

    .lang {
        margin-left: 17px;
        font-size: 17px;
    }

    .clock {
        flex-direction: column;
        gap: 4px;
        margin-left: 20px;
        font-size: 18px;
        line-height: 24px;
    }

    .notes {
        margin: 0 30px 0 28px;
    }

    .peek {
        width: 8px;
        border-left: 1px solid #8a93a0;
    }
</style>
